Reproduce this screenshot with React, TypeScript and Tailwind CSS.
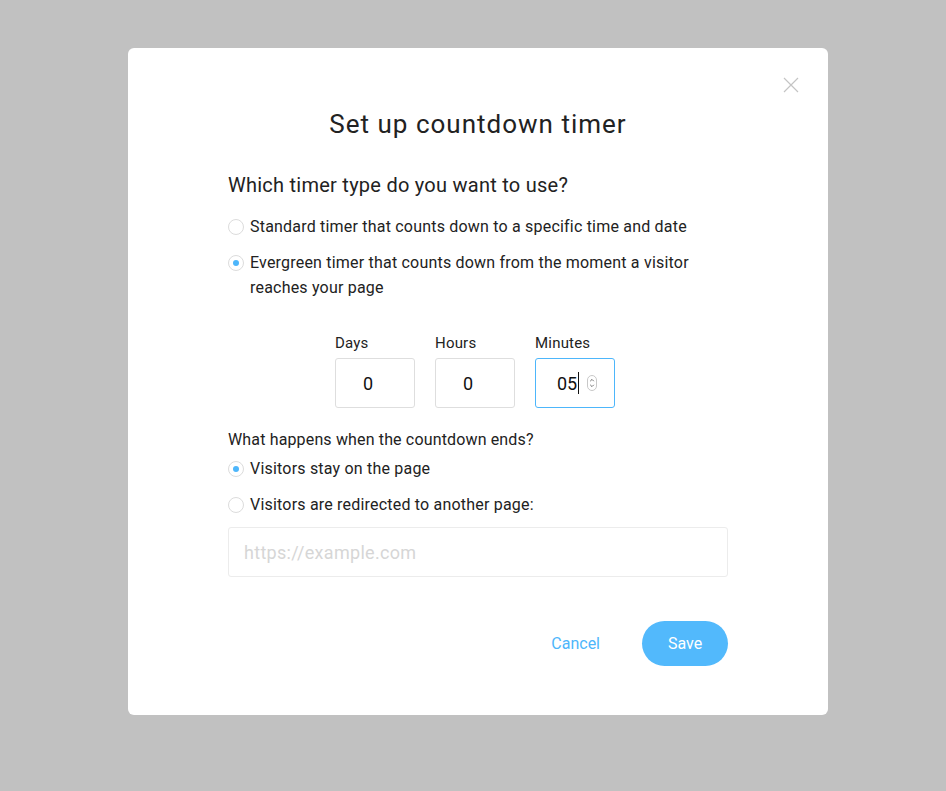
import { useState } from 'react';

const Radio = ({ checked, onClick }: { checked: boolean; onClick: () => void }) => (
  <button
    type="button"
    onClick={onClick}
    className="mt-[4px] flex h-4 w-4 shrink-0 items-center justify-center rounded-full border border-[#dcdcdc] bg-white"
  >
    {checked && <span className="h-[6px] w-[6px] rounded-full bg-[#4db6fb]" />}
  </button>
);

const TimeField = ({ label, value, active }: { label: string; value: string; active?: boolean }) => (
  <div className="flex flex-col">
    <label className="mb-[7px] text-[15px] leading-[16px] tracking-[0.2px] text-[#222]">{label}</label>
    <div
      className={`relative flex h-[50px] w-[80px] items-center justify-center rounded-[3px] border bg-white pr-[14px] ${
        active ? 'border-[#4db6fb]' : 'border-[#dedede]'
      }`}
    >
      <span className="text-[18px] text-[#111]">{value}</span>
      {active && (
        <>
          <span className="ml-[1px] h-[22px] w-[1px] bg-[#111]" />
          <svg
            className="absolute right-[17px] top-1/2 -translate-y-1/2"
            width="10"
            height="16"
            viewBox="0 0 10 16"
            fill="none"
          >
            <rect x="0.5" y="0.5" width="9" height="15" rx="4.5" stroke="#c8c8c8" />
            <path d="M3.2 6.2 L5 4.4 L6.8 6.2 M3.2 9.8 L5 11.6 L6.8 9.8" stroke="#666" strokeWidth="0.9" />
          </svg>
        </>
      )}
    </div>
  </div>
);

export default function App() {
  const [timerType, setTimerType] = useState<'standard' | 'evergreen'>('evergreen');
  const [after, setAfter] = useState<'stay' | 'redirect'>('stay');

  return (
    <div className="flex min-h-[791px] w-full justify-center bg-[#c1c1c1] pl-[10px] pt-[48px] font-['Roboto','Liberation_Sans',sans-serif]">
      <div className="relative h-[667px] w-[700px] rounded-[6px] bg-white px-[100px] pt-[61px]">
        <button type="button" className="absolute right-[29px] top-[29px] text-[#c4c4c4]">
          <svg width="16" height="16" viewBox="0 0 16 16" fill="none" stroke="currentColor" strokeWidth="1.2">
            <path d="M1 1 L15 15 M15 1 L1 15" />
          </svg>
        </button>

        <h1 className="text-center text-[26px] leading-[30px] tracking-[1px] text-[#222]">
          Set up countdown timer
        </h1>

        <h2 className="mt-[34px] text-[20px] leading-[24px] tracking-[0.25px] text-[#222]">
          Which timer type do you want to use?
        </h2>

        <div className="mt-[18px] flex flex-col gap-[12px] text-[16px] leading-[25px] tracking-[0.2px] text-[#222]">
          <div className="flex gap-[6px]">
            <Radio checked={timerType === 'standard'} onClick={() => setTimerType('standard')} />
            <span className="-mt-[1px]">Standard timer that counts down to a specific time and date</span>
          </div>
          <div className="flex gap-[6px]">
            <Radio checked={timerType === 'evergreen'} onClick={() => setTimerType('evergreen')} />
            <span className="-mt-[1px]">
              Evergreen timer that counts down from the moment a visitor
              <br />
              reaches your page
            </span>
          </div>
        </div>

        <div className="mt-[35px] flex justify-center gap-[20px] pr-[6px]">
          <TimeField label="Days" value="0" />
          <TimeField label="Hours" value="0" />
          <TimeField label="Minutes" value="05" active />
        </div>

        <p className="mt-[23px] text-[16px] leading-[18px] tracking-[0.15px] text-[#222]">
          What happens when the countdown ends?
        </p>

        <div className="mt-[8px] flex flex-col gap-[12px] text-[16px] leading-[25px] tracking-[0.2px] text-[#222]">
          <div className="flex gap-[6px]">
            <Radio checked={after === 'stay'} onClick={() => setAfter('stay')} />
            <span className="-mt-[1px]">Visitors stay on the page</span>
          </div>
          <div className="flex gap-[6px]">
            <Radio checked={after === 'redirect'} onClick={() => setAfter('redirect')} />
            <span className="-mt-[1px]">Visitors are redirected to another page:</span>
          </div>
        </div>

        <input
          type="text"
          placeholder="https://example.com"
          className="mt-[10px] h-[50px] w-full rounded-[3px] border border-[#ececec] px-[15px] text-[18px] tracking-[0.3px] text-[#222] outline-none placeholder:text-[#d6d6d6]"
        />

        <div className="mt-[44px] flex items-center justify-end gap-[42px]">
          <button type="button" className="text-[16px] text-[#4db6fb]">
            Cancel
          </button>
          <button type="button" className="h-[45px] w-[86px] rounded-full bg-[#52b9fc] text-[16px] text-white">
            Save
          </button>
        </div>
      </div>
    </div>
  );
}
